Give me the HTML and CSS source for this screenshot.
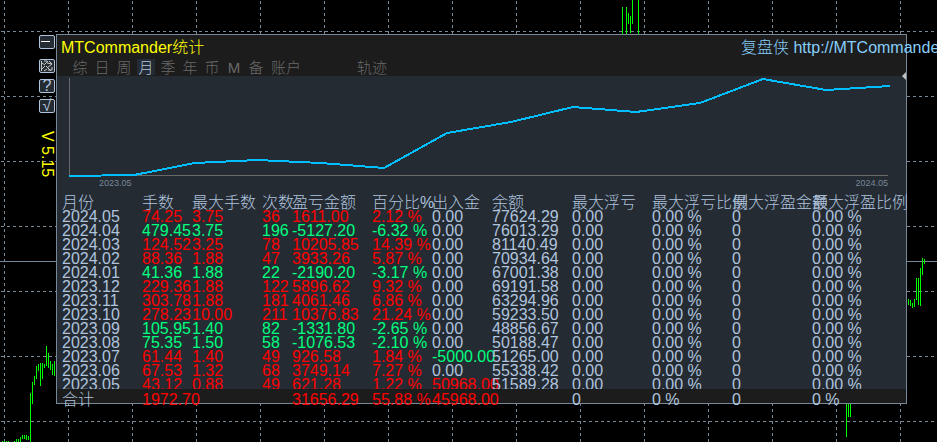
FILE: index.html
```
<!DOCTYPE html>
<html lang="zh-CN">
<head>
<meta charset="utf-8">
<title>MTCommander统计</title>
<link rel="stylesheet" href="styles.css">
</head>
<body>
<svg class="market" aria-hidden="true">
  <defs>
    <pattern id="vgrid" x="4" y="1" width="64" height="6" patternUnits="userSpaceOnUse"><rect width="1" height="3"/></pattern>
    <pattern id="hgrid" x="1" y="31" width="6" height="65" patternUnits="userSpaceOnUse"><rect width="3" height="1"/></pattern>
  </defs>
  <rect width="100%" height="100%" fill="url(#vgrid)"/>
  <rect width="100%" height="100%" fill="url(#hgrid)"/>
  <rect y="261" width="100%" height="1" class="price"/>
  <path class="bars" d="M2.500 441v1M4.500 441v1M6.500 441v1M8.500 441v1M14.500 441v1M16.500 439v3M18.500 439v3M20.500 437v5M22.500 435v4M24.500 435v4M26.500 435v5M28.500 436v4M30.500 393v49M32.500 382v22M34.500 376v9M36.500 366v13M38.500 364v7M40.500 363v23M42.500 363v16M44.500 364v4M46.500 346v20M48.500 353v15M50.500 361v9M52.500 364v11M54.500 361v15
  M622.500 7v27M626.500 7v27M628.500 13v11M630.500 16v17M632.500 0v24M638.500 0v34M846.500 403v34M848.500 403v14M850.500 403v14
  M908.500 299v6M910.500 300v6M912.500 303v5M914.500 299v8M916.500 278v22M918.500 278v27M920.500 268v38M922.500 258v17M924.500 259v5"/>
</svg>
<main class="workspace">
  <aside class="tools">
    <button class="tool" aria-label="最小化"><svg viewBox="0 0 14 12"><path d="M1 5.500h9"/></svg></button>
    <button class="tool wide" aria-label="移动"><svg viewBox="0 0 14 12"><path d="M1.500 1v10M2 3l3 2M2 9l3-3M4 1h3M5 4l3-3M7 3l5 1-5 4M6 6l5 5M9 1l3 3M4 11l3-2M8 10h4V7"/></svg></button>
    <button class="tool">?</button>
    <button class="tool">√</button>
    <span class="version">V 5.15</span>
  </aside>
  <section class="panel">
    <header class="head">
      <div class="titlebar">
        <h1>MTCommander统计</h1>
        <a href="#site">复盘侠 http://MTCommander</a>
      </div>
      <nav class="tabs">
        <button>综</button><button>日</button><button>周</button><button class="active">月</button><button>季</button><button>年</button><button>币</button><button>M</button><button>备</button><button class="account">账户</button><button class="track">轨迹</button>
      </nav>
      <svg class="handle" viewBox="0 0 4 8" aria-hidden="true"><path d="M4 0v8L0 4z"/></svg>
    </header>
    <figure class="chart">
      <svg viewBox="0 0 822 102" preserveAspectRatio="none" aria-label="余额曲线">
        <path class="axis" d="M1.500 2v97.500H820"/>
        <polyline points="1,100 34,99.500 66,99 127,87 189,84 253,87 316,92 379,57 443,46 505,31 568,36 632,27 695,3 758,14 822,10"/>
      </svg>
      <figcaption><span>2023.05</span><span>2024.05</span></figcaption>
    </figure>
    <table>
      <thead><tr><th>月份</th><th>手数</th><th>最大手数</th><th>次数</th><th>盈亏金额</th><th>百分比%</th><th>出入金</th><th>余额</th><th>最大浮亏</th><th>最大浮亏比例</th><th>最大浮盈金额</th><th>最大浮盈比例</th></tr></thead>
      <tbody>
        <tr class="up"><td>2024.05</td><td>74.25</td><td>3.75</td><td>36</td><td>1611.00</td><td>2.12 %</td><td>0.00</td><td>77624.29</td><td>0.00</td><td>0.00 %</td><td>0</td><td>0.00 %</td></tr>
        <tr class="down"><td>2024.04</td><td>479.45</td><td>3.75</td><td>196</td><td>-5127.20</td><td>-6.32 %</td><td>0.00</td><td>76013.29</td><td>0.00</td><td>0.00 %</td><td>0</td><td>0.00 %</td></tr>
        <tr class="up"><td>2024.03</td><td>124.52</td><td>3.25</td><td>78</td><td>10205.85</td><td>14.39 %</td><td>0.00</td><td>81140.49</td><td>0.00</td><td>0.00 %</td><td>0</td><td>0.00 %</td></tr>
        <tr class="up"><td>2024.02</td><td>88.36</td><td>1.88</td><td>47</td><td>3933.26</td><td>5.87 %</td><td>0.00</td><td>70934.64</td><td>0.00</td><td>0.00 %</td><td>0</td><td>0.00 %</td></tr>
        <tr class="down"><td>2024.01</td><td>41.36</td><td>1.88</td><td>22</td><td>-2190.20</td><td>-3.17 %</td><td>0.00</td><td>67001.38</td><td>0.00</td><td>0.00 %</td><td>0</td><td>0.00 %</td></tr>
        <tr class="up"><td>2023.12</td><td>229.36</td><td>1.88</td><td>122</td><td>5896.62</td><td>9.32 %</td><td>0.00</td><td>69191.58</td><td>0.00</td><td>0.00 %</td><td>0</td><td>0.00 %</td></tr>
        <tr class="up"><td>2023.11</td><td>303.78</td><td>1.88</td><td>181</td><td>4061.46</td><td>6.86 %</td><td>0.00</td><td>63294.96</td><td>0.00</td><td>0.00 %</td><td>0</td><td>0.00 %</td></tr>
        <tr class="up"><td>2023.10</td><td>278.23</td><td>10.00</td><td>211</td><td>10376.83</td><td>21.24 %</td><td>0.00</td><td>59233.50</td><td>0.00</td><td>0.00 %</td><td>0</td><td>0.00 %</td></tr>
        <tr class="down"><td>2023.09</td><td>105.95</td><td>1.40</td><td>82</td><td>-1331.80</td><td>-2.65 %</td><td>0.00</td><td>48856.67</td><td>0.00</td><td>0.00 %</td><td>0</td><td>0.00 %</td></tr>
        <tr class="down"><td>2023.08</td><td>75.35</td><td>1.50</td><td>58</td><td>-1076.53</td><td>-2.10 %</td><td>0.00</td><td>50188.47</td><td>0.00</td><td>0.00 %</td><td>0</td><td>0.00 %</td></tr>
        <tr class="up"><td>2023.07</td><td>61.44</td><td>1.40</td><td>49</td><td>926.58</td><td>1.84 %</td><td class="out">-5000.00</td><td>51265.00</td><td>0.00</td><td>0.00 %</td><td>0</td><td>0.00 %</td></tr>
        <tr class="up"><td>2023.06</td><td>67.53</td><td>1.32</td><td>68</td><td>3749.14</td><td>7.27 %</td><td>0.00</td><td>55338.42</td><td>0.00</td><td>0.00 %</td><td>0</td><td>0.00 %</td></tr>
        <tr class="up"><td>2023.05</td><td>43.12</td><td>0.88</td><td>49</td><td>621.28</td><td>1.22 %</td><td class="in">50968.00</td><td>51589.28</td><td>0.00</td><td>0.00 %</td><td>0</td><td>0.00 %</td></tr>
      </tbody>
      <tfoot><tr class="up"><td>合计</td><td>1972.70</td><td></td><td></td><td>31656.29</td><td>55.88 %</td><td class="in">45968.00</td><td></td><td>0</td><td>0 %</td><td>0</td><td>0 %</td></tr></tfoot>
    </table>
  </section>
</main>
</body>
</html>
```

FILE: styles.css
```
* { box-sizing: border-box; }
html, body { height: 100%; }
body {
  margin: 0;
  overflow: hidden;
  background: #000;
  color: #b0c4de;
  font: 16px/14px "Liberation Sans", Arial, "Noto Sans CJK SC", sans-serif;
  font-weight: 300;
}
button {
  margin: 0;
  padding: 0;
  border: 0;
  background: none;
  color: inherit;
  font: inherit;
}
.market {
  position: absolute;
  inset: 0;
  z-index: -1;
  width: 100%;
  height: 100%;
  fill: #778899;
  shape-rendering: crispEdges;
}
.price { fill: #778899; }
.bars { stroke: #00ff00; stroke-width: 1; fill: none; }

.workspace { display: flex; align-items: flex-start; padding: 34px 30px 0 39px; }
.tools { display: flex; flex-direction: column; gap: 6px; width: 17px; flex: none; padding-top: 1px; }
.tool {
  width: 16px;
  height: 14px;
  border: 1px solid #b0c4de;
  border-radius: 2px;
  background: #242b33;
  line-height: 12px;
}
.tool:first-child { margin-bottom: 4px; }
.tool svg { display: block; width: 14px; height: 12px; fill: none; stroke: #fff; }
.tool.wide svg { stroke: #c8c8c8; }
.version { margin-top: 12px; width: 16px; writing-mode: vertical-rl; line-height: 16px; color: #ff0; }

.panel { flex: 1; min-width: 0; border: 1px solid #778899; background: #242b33; }
.head { position: relative; height: 41px; background: #1c1c1c; }
.titlebar { display: flex; justify-content: space-between; padding: 4px 0 0 4px; line-height: 18px; white-space: nowrap; }
h1 { margin: 0; font: inherit; color: #ff0; }
.titlebar a { width: 165px; color: #87cefa; text-decoration: none; }
.tabs { display: flex; padding: 2px 0 0 12px; color: #696969; font-size: 15px; line-height: 17px; }
.tabs button { width: 22px; height: 16px; white-space: nowrap; }
.tabs .active { width: 18px; margin: 0 2px; background: #242b33; color: #b0c4de; }
.tabs .account { width: 38px; }
.tabs .track { width: 38px; margin-left: 48px; }
.handle { position: absolute; right: 0; bottom: -4px; width: 4px; height: 8px; fill: #c0c0c0; }

.chart { margin: 0; height: 115px; padding: 0 16px 0 11px; }
.chart svg { display: block; width: 100%; height: 102px; shape-rendering: crispEdges; fill: none; }
.axis { stroke: #696969; }
polyline { stroke: #00bfff; stroke-width: 2; }
figcaption { display: flex; justify-content: space-between; padding: 0 2px 0 31px; color: #778899; font-size: 9px; line-height: 10px; }

table, thead, tbody, tfoot { display: block; }
tr {
  display: grid;
  grid-template-columns: 80px 50px 70px 30px 80px 60px 60px 80px 80px 80px 80px 1fr;
  height: 14px;
  padding-left: 5px;
  line-height: 20px;
}
th, td { min-width: 0; padding: 0; text-align: left; font-weight: 300; white-space: nowrap; }
thead tr { height: 16px; line-height: 24px; }
.up td:nth-child(-n+6), .in { color: #f00; }
.down td:nth-child(-n+6), .out { color: #00ff7f; }
tr td:first-child:first-child { color: #b0c4de; }
/* The totals band covers the lower edge of the last row. */
tfoot { position: relative; background: #1c1c1c; }
tfoot tr { line-height: 22px; }
```
